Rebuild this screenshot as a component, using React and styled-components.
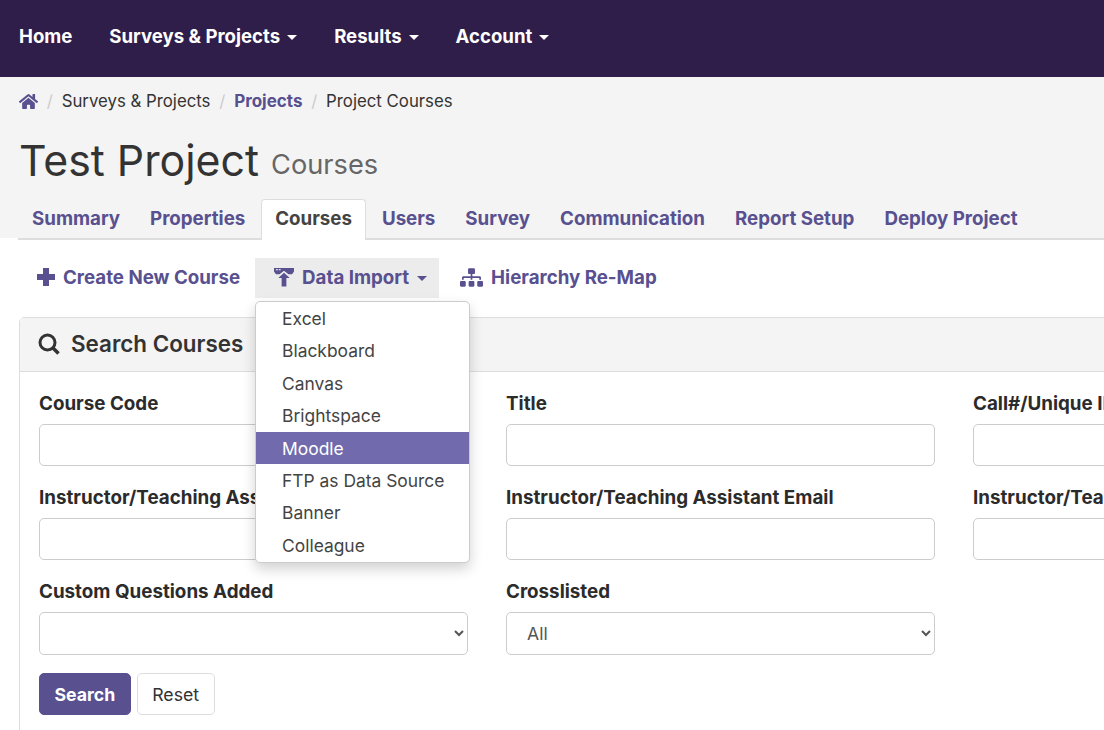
import styled, { createGlobalStyle } from "styled-components";
import { FaHome, FaSitemap } from "react-icons/fa";

const purple = "#58508f";

const GlobalStyle = createGlobalStyle`
  html, body {
    margin: 0;
    padding: 0;
    background: #fff;
    overflow: hidden;
  }
  body {
    font-family: Inter, "Liberation Sans", sans-serif;
    font-size: 17.6px;
    color: #333;
  }
  * {
    box-sizing: border-box;
  }
`;

const Page = styled.div`
  width: 1104px;
  height: 730px;
  overflow: hidden;
`;

const NavBar = styled.nav`
  height: 77px;
  background: #2f1d4a;
  display: flex;
  align-items: center;
  gap: 37px;
  padding: 0 19px 5px;
`;

const NavItem = styled.a`
  color: #fff;
  font-size: 18.6px;
  font-weight: 700;
  display: flex;
  align-items: center;
  gap: 7px;
`;

const Caret = styled.span`
  display: inline-block;
  width: 0;
  height: 0;
  margin-top: 2px;
  border-top: 5px solid currentColor;
  border-left: 5px solid transparent;
  border-right: 5px solid transparent;
`;

const Head = styled.header`
  height: 161px;
  background: #f4f4f4;
  padding: 0 0 0 18px;
  display: flex;
  flex-direction: column;
`;

const Breadcrumb = styled.div`
  height: 48px;
  padding-left: 1px;
  display: flex;
  align-items: center;
  font-size: 16.8px;
  color: #333;
`;

const Crumb = styled.span`
  font-size: ${(p) => (p.$link ? "17px" : "inherit")};
  font-weight: ${(p) => (p.$link ? 700 : 400)};
  color: ${(p) => (p.$link ? purple : "#333")};
`;

const CrumbSep = styled.span`
  color: #ccc;
  padding: 0 8.8px;
`;

const Title = styled.h1`
  margin: 0;
  height: 64px;
  padding: 8px 0 0 1px;
  font-size: 42.8px;
  font-weight: 400;
  color: #333;
  line-height: 56px;
`;

const TitleSub = styled.small`
  font-size: 27.2px;
  color: #666;
  vertical-align: 2px;
`;

const Tabs = styled.div`
  margin-top: auto;
  margin-bottom: -2px;
  height: 41px;
  display: flex;
  border-bottom: 2px solid #ddd;
`;

const Tab = styled.a`
  padding: 0 13px 4px;
  margin-right: 2px;
  height: 41px;
  display: flex;
  align-items: center;
  font-size: 18.72px;
  font-weight: 700;
  color: ${(p) => (p.$active ? "#444" : purple)};
  background: ${(p) => (p.$active ? "#fff" : "transparent")};
  border: 1px solid ${(p) => (p.$active ? "#ddd" : "transparent")};
  border-bottom: none;
  border-radius: 4px 4px 0 0;
`;

const Content = styled.main`
  padding: 0 0 0 19px;
`;

const Toolbar = styled.div`
  height: 79px;
  display: flex;
  align-items: flex-start;
  padding-top: 20px;
`;

const ToolButton = styled.a`
  position: relative;
  height: 40px;
  padding: ${(p) => (p.$open ? "0 12px 2px 19px" : "0 15px 2px 18px")};
  margin-left: ${(p) => (p.$spaced ? "3px" : "0")};
  display: flex;
  align-items: center;
  gap: 8px;
  font-size: 18.7px;
  font-weight: 700;
  color: ${purple};
  background: ${(p) => (p.$open ? "#ececec" : "transparent")};
  svg {
    flex: none;
  }
`;

const Menu = styled.ul`
  position: absolute;
  top: 43px;
  left: 0;
  width: 215px;
  margin: 0;
  padding: 0 0 1px;
  list-style: none;
  background: #fff;
  border: 1px solid #ccc;
  border-radius: 5px;
  box-shadow: 0 6px 13px rgba(0, 0, 0, 0.18);
  z-index: 10;
`;

const MenuItem = styled.li`
  height: 32.4px;
  padding: 0.8px 26px 0;
  display: flex;
  align-items: center;
  white-space: nowrap;
  font-size: 17.4px;
  font-weight: 400;
  color: ${(p) => (p.$active ? "#fff" : "#444")};
  background: ${(p) => (p.$active ? "#716bad" : "transparent")};
`;

const Panel = styled.section`
  width: 1400px;
  border: 1px solid #ddd;
  border-radius: 5px 5px 0 0;
`;

const PanelHead = styled.div`
  height: 54px;
  background: #f4f4f4;
  border-bottom: 1px solid #ddd;
  display: flex;
  align-items: center;
  gap: 11px;
  padding: 0 18px 2px;
  font-size: 22.4px;
  font-weight: 600;
  color: #333;
`;

const PanelBody = styled.div`
  padding: 19px 19px 40px;
`;

const FormGrid = styled.div`
  display: grid;
  grid-template-columns: repeat(3, 429px);
  column-gap: 38px;
  row-gap: 19px;
`;

const Field = styled.div`
  display: flex;
  flex-direction: column;
`;

const Label = styled.label`
  height: 33px;
  line-height: 26px;
  font-size: 18.8px;
  font-weight: 700;
  color: #2b2b2b;
  white-space: nowrap;
`;

const TextInput = styled.input`
  height: 42px;
  width: 100%;
  border: 1px solid #ccc;
  border-radius: 5px;
  background: #fff;
`;

const SelectBox = styled.select`
  height: 43px;
  width: 100%;
  padding: 0 16px;
  border: 1px solid #ccc;
  border-radius: 5px;
  background: #fff;
  font-family: inherit;
  font-size: 17.6px;
  color: #555;
`;

const Actions = styled.div`
  display: flex;
  gap: 6px;
  margin-top: 18px;
`;

const Button = styled.button`
  height: 42px;
  padding: 0 14.5px;
  border-radius: 5px;
  font-family: inherit;
  font-size: 17.7px;
  font-weight: ${(p) => (p.$primary ? 700 : 400)};
  color: ${(p) => (p.$primary ? "#fff" : "#333")};
  background: ${(p) => (p.$primary ? purple : "#fff")};
  border: 1px solid ${(p) => (p.$primary ? purple : "#ddd")};
`;

function PlusIcon() {
  return (
    <svg width="18" height="18" viewBox="0 0 18 18" fill="currentColor">
      <path d="M6 0h6v6h6v6h-6v6H6v-6H0V6h6z" />
    </svg>
  );
}

function ImportIcon() {
  return (
    <svg width="20" height="19" viewBox="0 0 21 20" fill="currentColor">
      <path d="M0 0h21v3.6l-2 3h-3.8L10.5 2.8 5.8 6.6H2l-2-3z" />
      <rect x="2" y="1.2" width="2" height="1.2" fill="#ececec" />
      <rect x="5" y="1.2" width="2" height="1.2" fill="#ececec" />
      <path d="M10.5 5 16.5 10.4H13V19.5H8V10.4H4.5z" />
    </svg>
  );
}

function SearchIcon() {
  return (
    <svg width="22" height="22" viewBox="0 0 22 22" fill="none" stroke="currentColor">
      <circle cx="9.5" cy="9.5" r="7.5" strokeWidth="3" />
      <path d="M15 15l5.5 5.5" strokeWidth="3.6" />
    </svg>
  );
}

const tabs = ["Summary", "Properties", "Courses", "Users", "Survey", "Communication", "Report Setup", "Deploy Project"];
const importItems = ["Excel", "Blackboard", "Canvas", "Brightspace", "Moodle", "FTP as Data Source", "Banner", "Colleague"];

export default function App() {
  return (
    <Page>
      <GlobalStyle />
      <NavBar>
        <NavItem>Home</NavItem>
        <NavItem>Surveys &amp; Projects <Caret /></NavItem>
        <NavItem>Results <Caret /></NavItem>
        <NavItem>Account <Caret /></NavItem>
      </NavBar>
      <Head>
        <Breadcrumb>
          <Crumb $link><FaHome size={19} color={purple} style={{ display: "block" }} /></Crumb>
          <CrumbSep>/</CrumbSep>
          <Crumb>Surveys &amp; Projects</Crumb>
          <CrumbSep>/</CrumbSep>
          <Crumb $link>Projects</Crumb>
          <CrumbSep>/</CrumbSep>
          <Crumb>Project Courses</Crumb>
        </Breadcrumb>
        <Title>Test Project <TitleSub>Courses</TitleSub></Title>
        <Tabs>
          {tabs.map((t) => (
            <Tab key={t} $active={t === "Courses"}>{t}</Tab>
          ))}
        </Tabs>
      </Head>
      <Content>
        <Toolbar>
          <ToolButton><PlusIcon /> Create New Course</ToolButton>
          <ToolButton $open>
            <ImportIcon /> Data Import <Caret />
            <Menu>
              {importItems.map((m) => (
                <MenuItem key={m} $active={m === "Moodle"}>{m}</MenuItem>
              ))}
            </Menu>
          </ToolButton>
          <ToolButton $spaced><FaSitemap size={23} /> Hierarchy Re-Map</ToolButton>
        </Toolbar>
        <Panel>
          <PanelHead><SearchIcon /> Search Courses</PanelHead>
          <PanelBody>
            <FormGrid>
              <Field><Label>Course Code</Label><TextInput /></Field>
              <Field><Label>Title</Label><TextInput /></Field>
              <Field><Label>Call#/Unique ID</Label><TextInput /></Field>
              <Field><Label>Instructor/Teaching Assistant Name</Label><TextInput /></Field>
              <Field><Label>Instructor/Teaching Assistant Email</Label><TextInput /></Field>
              <Field><Label>Instructor/Teaching Assistant Username</Label><TextInput /></Field>
              <Field><Label>Custom Questions Added</Label><SelectBox><option></option></SelectBox></Field>
              <Field><Label>Crosslisted</Label><SelectBox><option>All</option></SelectBox></Field>
            </FormGrid>
            <Actions>
              <Button $primary>Search</Button>
              <Button>Reset</Button>
            </Actions>
          </PanelBody>
        </Panel>
      </Content>
    </Page>
  );
}
